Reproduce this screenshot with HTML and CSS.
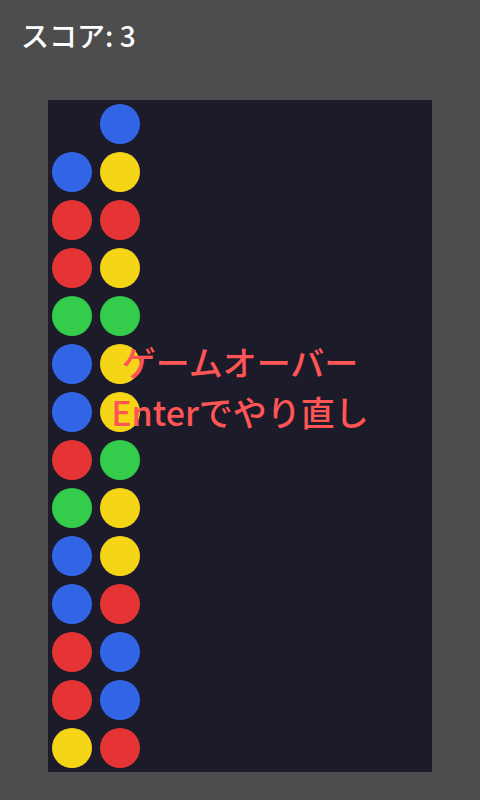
FILE: index.html
```html
<!DOCTYPE html>
<html lang="ja">
<head>
<meta charset="utf-8">
<link rel="stylesheet" href="styles.css">
</head>
<body>
<div class="score">スコア: 3</div>
<div class="board">
  <div class="col">
    <span class="cell"></span>
    <span class="cell b"></span><span class="cell r"></span><span class="cell r"></span><span class="cell g"></span>
    <span class="cell b"></span><span class="cell b"></span><span class="cell r"></span><span class="cell g"></span>
    <span class="cell b"></span><span class="cell b"></span><span class="cell r"></span><span class="cell r"></span>
    <span class="cell y"></span>
  </div>
  <div class="col">
    <span class="cell b"></span><span class="cell y"></span><span class="cell r"></span><span class="cell y"></span>
    <span class="cell g"></span><span class="cell y"></span><span class="cell y"></span><span class="cell g"></span>
    <span class="cell y"></span><span class="cell y"></span><span class="cell r"></span><span class="cell b"></span>
    <span class="cell b"></span><span class="cell r"></span>
  </div>
  <div class="overlay">
    <div class="line">ゲームオーバー</div>
    <div class="line">Enterでやり直し</div>
  </div>
</div>
</body>
</html>
```
FILE: styles.css
```css
html, body {
  margin: 0;
  padding: 0;
  background: #4d4d4d;
  width: 480px;
  height: 800px;
  overflow: hidden;
  font-family: "Noto Sans CJK JP", "Noto Sans", sans-serif;
}
.score {
  color: #ffffff;
  font-size: 28px;
  font-weight: 500;
  line-height: 36px;
  padding: 17px 0 0 21px;
  box-sizing: border-box;
  height: 100px;
}
.board {
  position: relative;
  margin-left: 48px;
  width: 384px;
  height: 672px;
  background: #1b1b2a;
  display: flex;
}
.col {
  display: flex;
  flex-direction: column;
  width: 48px;
}
.cell {
  display: block;
  width: 40px;
  height: 40px;
  margin: 4px;
  border-radius: 50%;
}
.b { background: #3366e6; }
.y { background: #f5d617; }
.r { background: #e63333; }
.g { background: #33cc4d; }
.overlay {
  position: absolute;
  left: 0;
  top: 0;
  right: 0;
  padding-top: 237px;
  text-align: center;
  color: #ff5555;
  font-size: 34px;
  font-weight: 500;
  line-height: 50px;
}
```
